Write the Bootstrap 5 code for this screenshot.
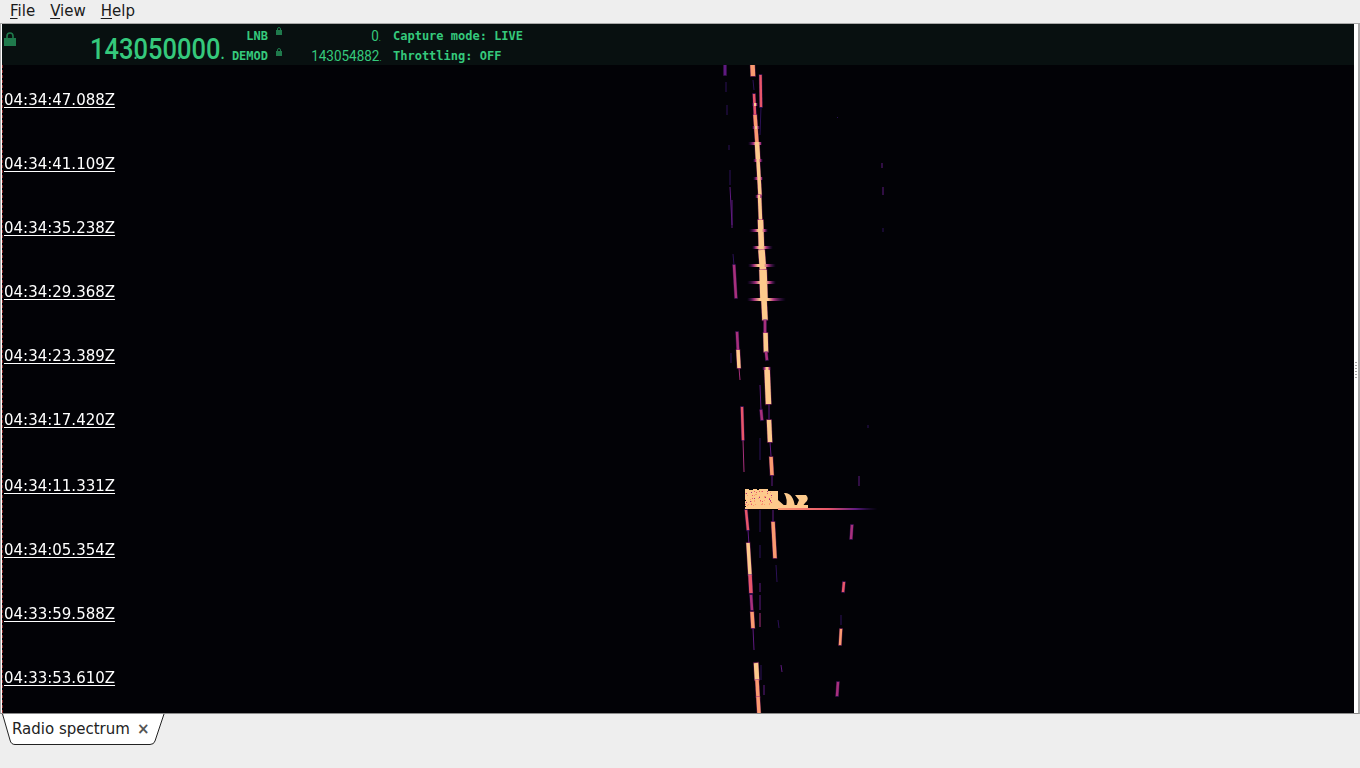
<!DOCTYPE html>
<html lang="en">
<head>
    <meta charset="UTF-8">
    <title>Radio spectrum</title>
    <link href="https://cdn.jsdelivr.net/npm/bootstrap@5.3.3/dist/css/bootstrap.min.css" rel="stylesheet">
    <style>
        html, body { height: 100%; overflow: hidden; }
        body { background: #eeeeee; font-family: "DejaVu Sans", sans-serif; font-size: 15px; color: #1a1a1a; }
        .app-menu { height: 23px; padding-left: 2px; line-height: 22px; }
        .app-menu span { padding: 0 8px; margin-right: -1px; font-size: 15px; }
        .app-menu u { text-underline-offset: 2px; }
        .app-frame { height: 691px; background: #fff; border-top: 1px solid #a9a9a9; border-left: 1px solid #a9a9a9; border-right: 2px solid #a9a9a9; border-bottom: 1px solid #8a8a8a; padding-left: 1px; padding-right: 4px; position: relative; width: 1360px; }
        .status-bar { height: 41px; background: #081010; color: #35c97c; font-family: "DejaVu Sans Mono", monospace; font-weight: 700; font-size: 12px; }
        .lock-col { width: 16px; padding: 5px 0 0 2px; }
        .freq-big { width: 202px; text-align: right; padding-top: 4px; margin-right: -2px; }
        .freq-big span { display: inline-block; font-family: Roboto, sans-serif; font-weight: 500; font-size: 30px; line-height: 41px; transform: scaleX(.85); transform-origin: right center; color: #35c97c; }
        .freq-big i, .freq-small i { display: inline-block; width: 0; font-style: normal; font-size: 60%; }
        .label-col { width: 50px; }
        .label-col div, .value-col div, .mode-col div { height: 20px; line-height: 20px; }
        .label-col div { text-align: right; padding-top: 2px; }
        .small-lock-col { width: 18px; padding-left: 8px; }
        .small-lock-col svg { display: block; height: 8px; margin-top: 3px; margin-bottom: 13px; }
        .value-col { width: 94px; }
        .freq-small { text-align: right; padding-top: 2px; padding-right: 1px; }
        .freq-small span { display: inline-block; font-family: Roboto, sans-serif; font-weight: 400; font-size: 15.5px; transform: scaleX(.87); transform-origin: right center; }
        .mode-col { margin-left: 13px; }
        .mode-col div { padding-top: 2px; }
        .waterfall { height: 648px; position: relative; background: #020206; border-left: 1px dashed #8a2a2a; }
        .waterfall canvas { display: block; position: absolute; left: -1px; top: 0; }
        .time-labels { position: absolute; left: 1px; top: 3px; color: #fff; }
        .time-labels div { height: 64px; line-height: 64px; text-decoration: underline; text-underline-offset: 2px; font-size: 15px; }
        .time-labels .late-row { margin-top: 2px; }
        .grip-dots { position: absolute; right: 1px; top: 338px; width: 2px; height: 17px; background: repeating-linear-gradient(#a8a8a8 0 1px, transparent 1px 3px); }
        .tab-strip { position: relative; height: 54px; }
        .tab-shape { position: absolute; left: 0; top: 0; }
        .tab-label { position: relative; padding: 5px 0 0 12px; line-height: 20px; gap: 7px; color: #222; }
        .tab-close { font-size: 15px; font-weight: 700; color: #555; }
    </style>
</head>
<body>
<div class="d-flex flex-column">
    <!-- Menu -->
    <div class="app-menu d-flex">
        <span><u>F</u>ile</span>
        <span><u>V</u>iew</span>
        <span><u>H</u>elp</span>
    </div>

    <div class="app-frame">
        <!-- Status -->
        <div class="status-bar d-flex">
            <div class="lock-col">
                <svg width="12" height="14" viewBox="0 0 12 14"><path d="M3 6V4a3 3 0 0 1 6 0v2" fill="none" stroke="#1f7a4c" stroke-width="1.6"/><rect x="0" y="6" width="12" height="8" fill="#1f7a4c"/></svg>
            </div>
            <div class="freq-big"><span>143<i>.</i>050<i>.</i>000<i>.</i></span></div>
            <div class="label-col">
                <div>LNB</div>
                <div>DEMOD</div>
            </div>
            <div class="small-lock-col">
                <svg width="6" height="8" viewBox="0 0 6 8"><path d="M1.5 3.5V2a1.5 1.5 0 0 1 3 0v1.5" fill="none" stroke="#1f7a4c"/><rect x="0" y="3" width="6" height="5" fill="#1f7a4c"/></svg>
                <svg width="6" height="8" viewBox="0 0 6 8"><path d="M1.5 3.5V2a1.5 1.5 0 0 1 3 0v1.5" fill="none" stroke="#1f7a4c"/><rect x="0" y="3" width="6" height="5" fill="#1f7a4c"/></svg>
            </div>
            <div class="value-col">
                <div class="freq-small"><span>0<i>.</i></span></div>
                <div class="freq-small"><span>143<i>.</i>054<i>.</i>882<i>.</i></span></div>
            </div>
            <div class="mode-col">
                <div>Capture mode: LIVE</div>
                <div>Throttling: OFF</div>
            </div>
        </div>

        <!-- Spectrum -->
        <div class="waterfall">
            <canvas id="spectrum" width="1352" height="648"></canvas>
            <div class="time-labels">
                <div>04:34:47.088Z</div>
                <div>04:34:41.109Z</div>
                <div>04:34:35.238Z</div>
                <div>04:34:29.368Z</div>
                <div>04:34:23.389Z</div>
                <div>04:34:17.420Z</div>
                <div class="late-row">04:34:11.331Z</div>
                <div>04:34:05.354Z</div>
                <div>04:33:59.588Z</div>
                <div>04:33:53.610Z</div>
            </div>
        </div>
        <div class="grip-dots"></div>
    </div>

    <!-- Tabs -->
    <div class="tab-strip">
        <svg class="tab-shape" width="170" height="34" viewBox="0 0 170 34">
            <path d="M2.5 0 L10 26 Q11 30.5 15 30.5 L150 30.5 Q154 30.5 155 27 L164 0" fill="#fff" stroke="#222" stroke-width="1"/>
        </svg>
        <div class="tab-label d-flex align-items-center">
            <span>Radio spectrum</span>
            <span class="tab-close">×</span>
        </div>
    </div>
</div>

<script>
    const ctx = document.getElementById('spectrum').getContext('2d');
    ctx.translate(-2, -65);

    const D = '#2c1158', P = '#5f1a80', M = '#a8307c', C = '#e8566a', O = '#fb9a70', Y = '#fdca8c';

    // x1, y1, x2, y2, width, colour
    const traces = [
        // main line, top part
        [752.5,65,753,76,4,O], [753,80,754,90,1,D], [754,94,755,115,2,C], [755,115,757,143,3,O],
        [757,143,758,160,4,Y], [758,160,759,178,3,Y], [759,178,760,195,3,Y], [759.5,195,760.5,220,3,Y],
        [760.5,220,761.5,250,5,Y], [761.5,250,763,270,6,Y], [763,270,764,300,7,Y], [764,300,765,320,5,Y],
        [765,320,765,333,2,M], [765.5,333,766,352,4,Y], [766,352,767,360,2,M],
        [767,368,768.5,404,5,Y], [769,404,769,419,1,P], [769,420,770,442,4,Y], [770,442,771,456,1,P],
        [771,457,772,475,3,O], [772,475,772,486,1,P],
        // below the burst
        [773,510,773,522,1,P], [773,522,775,558,3,O], [776,565,777,582,1,D],
        [746,510,748,530,2,C], [748,530,749,545,1,P], [748,543,750,575,3,Y], [750,575,751,593,3,C],
        [751,595,752,610,2,M], [752,612,753,628,3,O], [753,628,754,650,1,P],
        [756,663,757,680,4,Y], [757,680,758,697,3,O], [758,697,759,713,3,O],
        // second line
        [760.5,75,761,107,2,C], [761,107,760,135,1,D], [760,510,760,532,1,D], [760,545,760,558,1,D],
        [760,583,760,592,1,P], [760,595,760,610,1,P], [760,613,760,627,1,M], [761,665,761,680,1,D],
        [760,385,761,410,1,P], [761,410,762,420,2,M], [760,438,760,460,1,D],
        [764,685,764,695,1,P],
        // left line
        [725,65,725,75,2,P], [726,82,726,92,1,D], [727,105,727,115,1,D], [729,145,729,150,1,D],
        [730,170,730,185,1,D], [730,187,732,225,1,P], [732,200,732,228,1,P],
        [733,254,734,265,1,D], [734,265,736,298,2,M],
        [737,332,738,350,2,M], [738,350,739,368,3,Y], [739,368,740,380,1,M], [731,353,731,363,1,D],
        [742,407,743,440,2,C], [743,440,744,472,1,M],
        // faint and right lines
        [778,620,779,628,1,D], [781,665,782,672,1,P], [844,582,843,592,2,C],
        [841,615,841,625,1,D], [841,629,840,645,2,O], [838,682,837,696,2,M],
        [852,525,851,539,2,M], [859,476,859,486,1,P], [868,425,868,428,1,D],
        [882,163,882,168,1,P], [883,187,883,195,1,P], [837,117,838,118,1,D], [883,228,883,232,1,D]
    ];

    traces.forEach(([x1, y1, x2, y2, w, colour]) => {
        if (w > 1) {
            ctx.globalAlpha = .55;
            ctx.strokeStyle = colour === Y || colour === O ? M : P;
            ctx.lineWidth = w + 1.5;
            ctx.beginPath();
            ctx.moveTo(x1, y1 - 1);
            ctx.lineTo(x2, y2 + 1);
            ctx.stroke();
            ctx.globalAlpha = 1;
        }
        ctx.strokeStyle = colour;
        ctx.lineWidth = w > 1 ? w + .5 : w;
        ctx.beginPath();
        ctx.moveTo(x1, y1);
        ctx.lineTo(x2, y2);
        ctx.stroke();
    });

    // horizontal flares on the main line: y, left, centre, right
    const flares = [[104,752,755,758], [127,752,756,760], [143,748,757,762], [160,753,758,763], [178,753,759,763], [196,755,759,762],
        [230,749,760,768], [247,752,761,773], [265,748,761,776], [282,747,763,776], [299,747,764,786], [368,762,767,771]];
    flares.forEach(([y, left, mid, right]) => {
        const g = ctx.createLinearGradient(left, 0, right, 0);
        const m = (mid - left) / (right - left);
        g.addColorStop(0, 'rgba(60,15,110,0)');
        g.addColorStop(Math.max(m - .25, .05), M);
        g.addColorStop(Math.max(m - .1, .1), Y);
        g.addColorStop(Math.min(m + .1, .9), Y);
        g.addColorStop(Math.min(m + .25, .95), M);
        g.addColorStop(1, 'rgba(60,15,110,0)');
        ctx.fillStyle = g;
        ctx.fillRect(left, y - 1, right - left, 3);
    });

    // burst around 04:34:08
    ctx.fillStyle = Y;
    ctx.fillRect(745, 489, 33, 20);
    ctx.fillRect(778, 505, 30, 5);
    ctx.beginPath();
    ctx.moveTo(778, 500); ctx.lineTo(786, 507); ctx.lineTo(778, 507);
    ctx.fill();
    ctx.beginPath();
    ctx.moveTo(784, 493); ctx.quadraticCurveTo(793, 492, 795, 507); ctx.lineTo(786, 507); ctx.quadraticCurveTo(788, 499, 784, 493);
    ctx.fill();
    ctx.beginPath();
    ctx.moveTo(795, 495); ctx.lineTo(806, 495); ctx.quadraticCurveTo(810, 499, 805, 503); ctx.lineTo(802, 507); ctx.lineTo(796, 507); ctx.lineTo(799, 500);
    ctx.fill();

    // speckle inside the burst
    let seed = 7;
    const rnd = () => (seed = (seed * 16807) % 2147483647) / 2147483647;
    for (let i = 0; i < 60; i++) {
        const x = 745 + Math.floor(rnd() * 28);
        const y = 489 + Math.floor(rnd() * 17);
        ctx.fillStyle = [O, C, M, O][Math.floor(rnd() * 4)];
        ctx.fillRect(x, y, 1, 1);
    }
    ctx.fillStyle = '#020206';
    [[749,489,4],[757,489,2],[768,489,10],[768,490,10],[745,500,1],[745,506,1]].forEach(([x, y, w]) => ctx.fillRect(x, y, w, 1));

    // tail of the burst
    const tail = ctx.createLinearGradient(778, 0, 878, 0);
    tail.addColorStop(0, O);
    tail.addColorStop(.5, C);
    tail.addColorStop(.78, P);
    tail.addColorStop(1, 'rgba(44,17,88,0)');
    ctx.fillStyle = tail;
    ctx.fillRect(778, 508, 100, 2);
</script>
<script src="https://cdn.jsdelivr.net/npm/bootstrap@5.3.3/dist/js/bootstrap.bundle.min.js"></script>
</body>
</html>
